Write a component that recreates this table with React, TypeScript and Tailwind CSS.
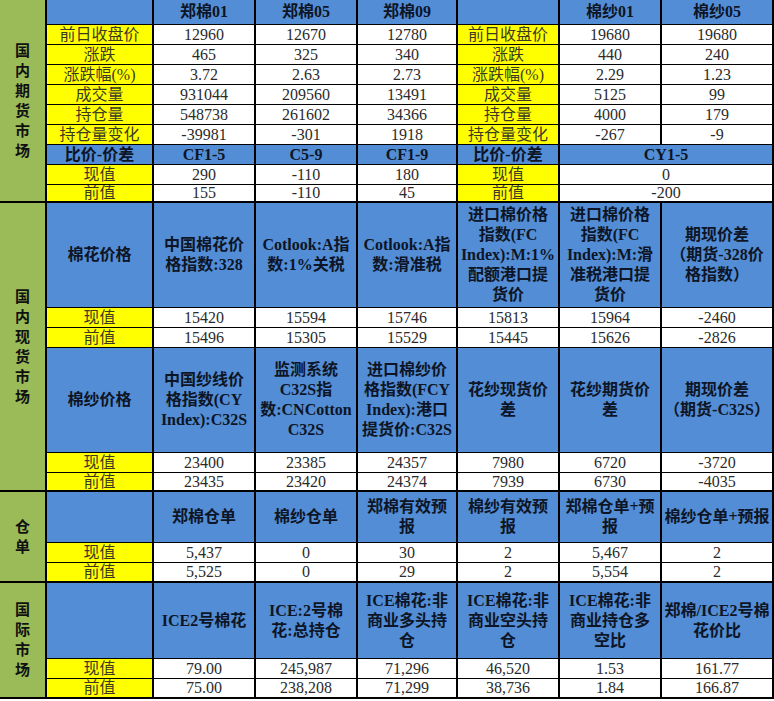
import React from 'react';
import clsx from 'clsx';

type Tone = 'b' | 'y' | 'w';

const tones: Record<Tone, string> = {
  b: 'bg-[#538dd5] font-bold text-[#0d1526]',
  y: 'bg-[#ffff00] text-[#3b3b24]',
  w: 'bg-white text-[#2b2b2b]',
};

type C = { t: Tone; v?: string | string[]; span?: boolean };

const Cell = ({ t, v, span }: C) => {
  const lines = Array.isArray(v) ? v : v ? [v] : [];
  return (
    <div
      className={clsx(
        'flex flex-col items-center justify-center text-center text-[16px] leading-[20px] whitespace-nowrap overflow-hidden',
        tones[t],
        span && 'col-span-2'
      )}
    >
      {lines.map((l, i) => (
        <span key={i}>{l}</span>
      ))}
    </div>
  );
};

const Side = ({ text, rows }: { text: string; rows: string }) => (
  <div className={clsx(rows, 'bg-[#9bbb59] flex flex-col items-center justify-center text-[15px] leading-[20px] font-bold text-[#111]')}>
    {text.split('').map((ch, i) => (
      <span key={i}>{ch}</span>
    ))}
  </div>
);

const y = (v: string): C => ({ t: 'y', v });
const w = (v: string): C => ({ t: 'w', v });
const b = (v?: string | string[]): C => ({ t: 'b', v });

const futures: C[][] = [
  [b(), b('郑棉01'), b('郑棉05'), b('郑棉09'), b(), b('棉纱01'), b('棉纱05')],
  [y('前日收盘价'), w('12960'), w('12670'), w('12780'), y('前日收盘价'), w('19680'), w('19680')],
  [y('涨跌'), w('465'), w('325'), w('340'), y('涨跌'), w('440'), w('240')],
  [y('涨跌幅(%)'), w('3.72'), w('2.63'), w('2.73'), y('涨跌幅(%)'), w('2.29'), w('1.23')],
  [y('成交量'), w('931044'), w('209560'), w('13491'), y('成交量'), w('5125'), w('99')],
  [y('持仓量'), w('548738'), w('261602'), w('34366'), y('持仓量'), w('4000'), w('179')],
  [y('持仓量变化'), w('-39981'), w('-301'), w('1918'), y('持仓量变化'), w('-267'), w('-9')],
  [b('比价-价差'), b('CF1-5'), b('C5-9'), b('CF1-9'), b('比价-价差'), { t: 'b', v: 'CY1-5', span: true }],
  [y('现值'), w('290'), w('-110'), w('180'), y('现值'), { t: 'w', v: '0', span: true }],
  [y('前值'), w('155'), w('-110'), w('45'), y('前值'), { t: 'w', v: '-200', span: true }],
];

const spot: C[][] = [
  [
    b('棉花价格'),
    b(['中国棉花价', '格指数:328']),
    b(['Cotlook:A指', '数:1%关税']),
    b(['Cotlook:A指', '数:滑准税']),
    b(['进口棉价格', '指数(FC', 'Index):M:1%', '配额港口提', '货价']),
    b(['进口棉价格', '指数(FC', 'Index):M:滑', '准税港口提', '货价']),
    b(['期现价差', '（期货-328价', '格指数）']),
  ],
  [y('现值'), w('15420'), w('15594'), w('15746'), w('15813'), w('15964'), w('-2460')],
  [y('前值'), w('15496'), w('15305'), w('15529'), w('15445'), w('15626'), w('-2826')],
  [
    b('棉纱价格'),
    b(['中国纱线价', '格指数(CY', 'Index):C32S']),
    b(['监测系统', 'C32S指', '数:CNCotton', 'C32S']),
    b(['进口棉纱价', '格指数(FCY', 'Index):港口', '提货价:C32S']),
    b(['花纱现货价', '差']),
    b(['花纱期货价', '差']),
    b(['期现价差', '（期货-C32S）']),
  ],
  [y('现值'), w('23400'), w('23385'), w('24357'), w('7980'), w('6720'), w('-3720')],
  [y('前值'), w('23435'), w('23420'), w('24374'), w('7939'), w('6730'), w('-4035')],
];

const receipts: C[][] = [
  [b(), b('郑棉仓单'), b('棉纱仓单'), b(['郑棉有效预', '报']), b(['棉纱有效预', '报']), b(['郑棉仓单+预', '报']), b('棉纱仓单+预报')],
  [y('现值'), w('5,437'), w('0'), w('30'), w('2'), w('5,467'), w('2')],
  [y('前值'), w('5,525'), w('0'), w('29'), w('2'), w('5,554'), w('2')],
];

const intl: C[][] = [
  [
    b(),
    b('ICE2号棉花'),
    b(['ICE:2号棉', '花:总持仓']),
    b(['ICE棉花:非', '商业多头持', '仓']),
    b(['ICE棉花:非', '商业空头持', '仓']),
    b(['ICE棉花:非', '商业持仓多', '空比']),
    b(['郑棉/ICE2号棉', '花价比']),
  ],
  [y('现值'), w('79.00'), w('245,987'), w('71,296'), w('46,520'), w('1.53'), w('161.77')],
  [y('前值'), w('75.00'), w('238,208'), w('71,299'), w('38,736'), w('1.84'), w('166.87')],
];

const cols = 'grid grid-cols-[45px_105px_100px_100px_98px_100px_100px_110px] gap-x-[2px] gap-y-px';

const Section = ({ label, span, rows, data }: { label: string; span: string; rows: string; data: C[][] }) => (
  <div className={clsx(cols, rows)}>
    <Side text={label} rows={span} />
    {data.flat().map((c, i) => (
      <Cell key={i} {...c} />
    ))}
  </div>
);

export default function App() {
  return (
    <div className="w-[774px] h-[701px] bg-white font-['Liberation_Serif','Noto_Sans_CJK_SC',serif]">
      <div className="w-[774px] flex flex-col gap-[2px] bg-black border-r-2 border-b-2 border-black">
        <Section label="国内期货市场" span="row-span-10" rows="grid-rows-[24px_repeat(8,19px)_16px]" data={futures} />
        <Section label="国内现货市场" span="row-span-6" rows="grid-rows-[104px_19px_19px_104px_19px_17px]" data={spot} />
        <Section label="仓单" span="row-span-3" rows="grid-rows-[50px_19px_18px]" data={receipts} />
        <Section label="国际市场" span="row-span-3" rows="grid-rows-[75px_19px_18px]" data={intl} />
      </div>
    </div>
  );
}
